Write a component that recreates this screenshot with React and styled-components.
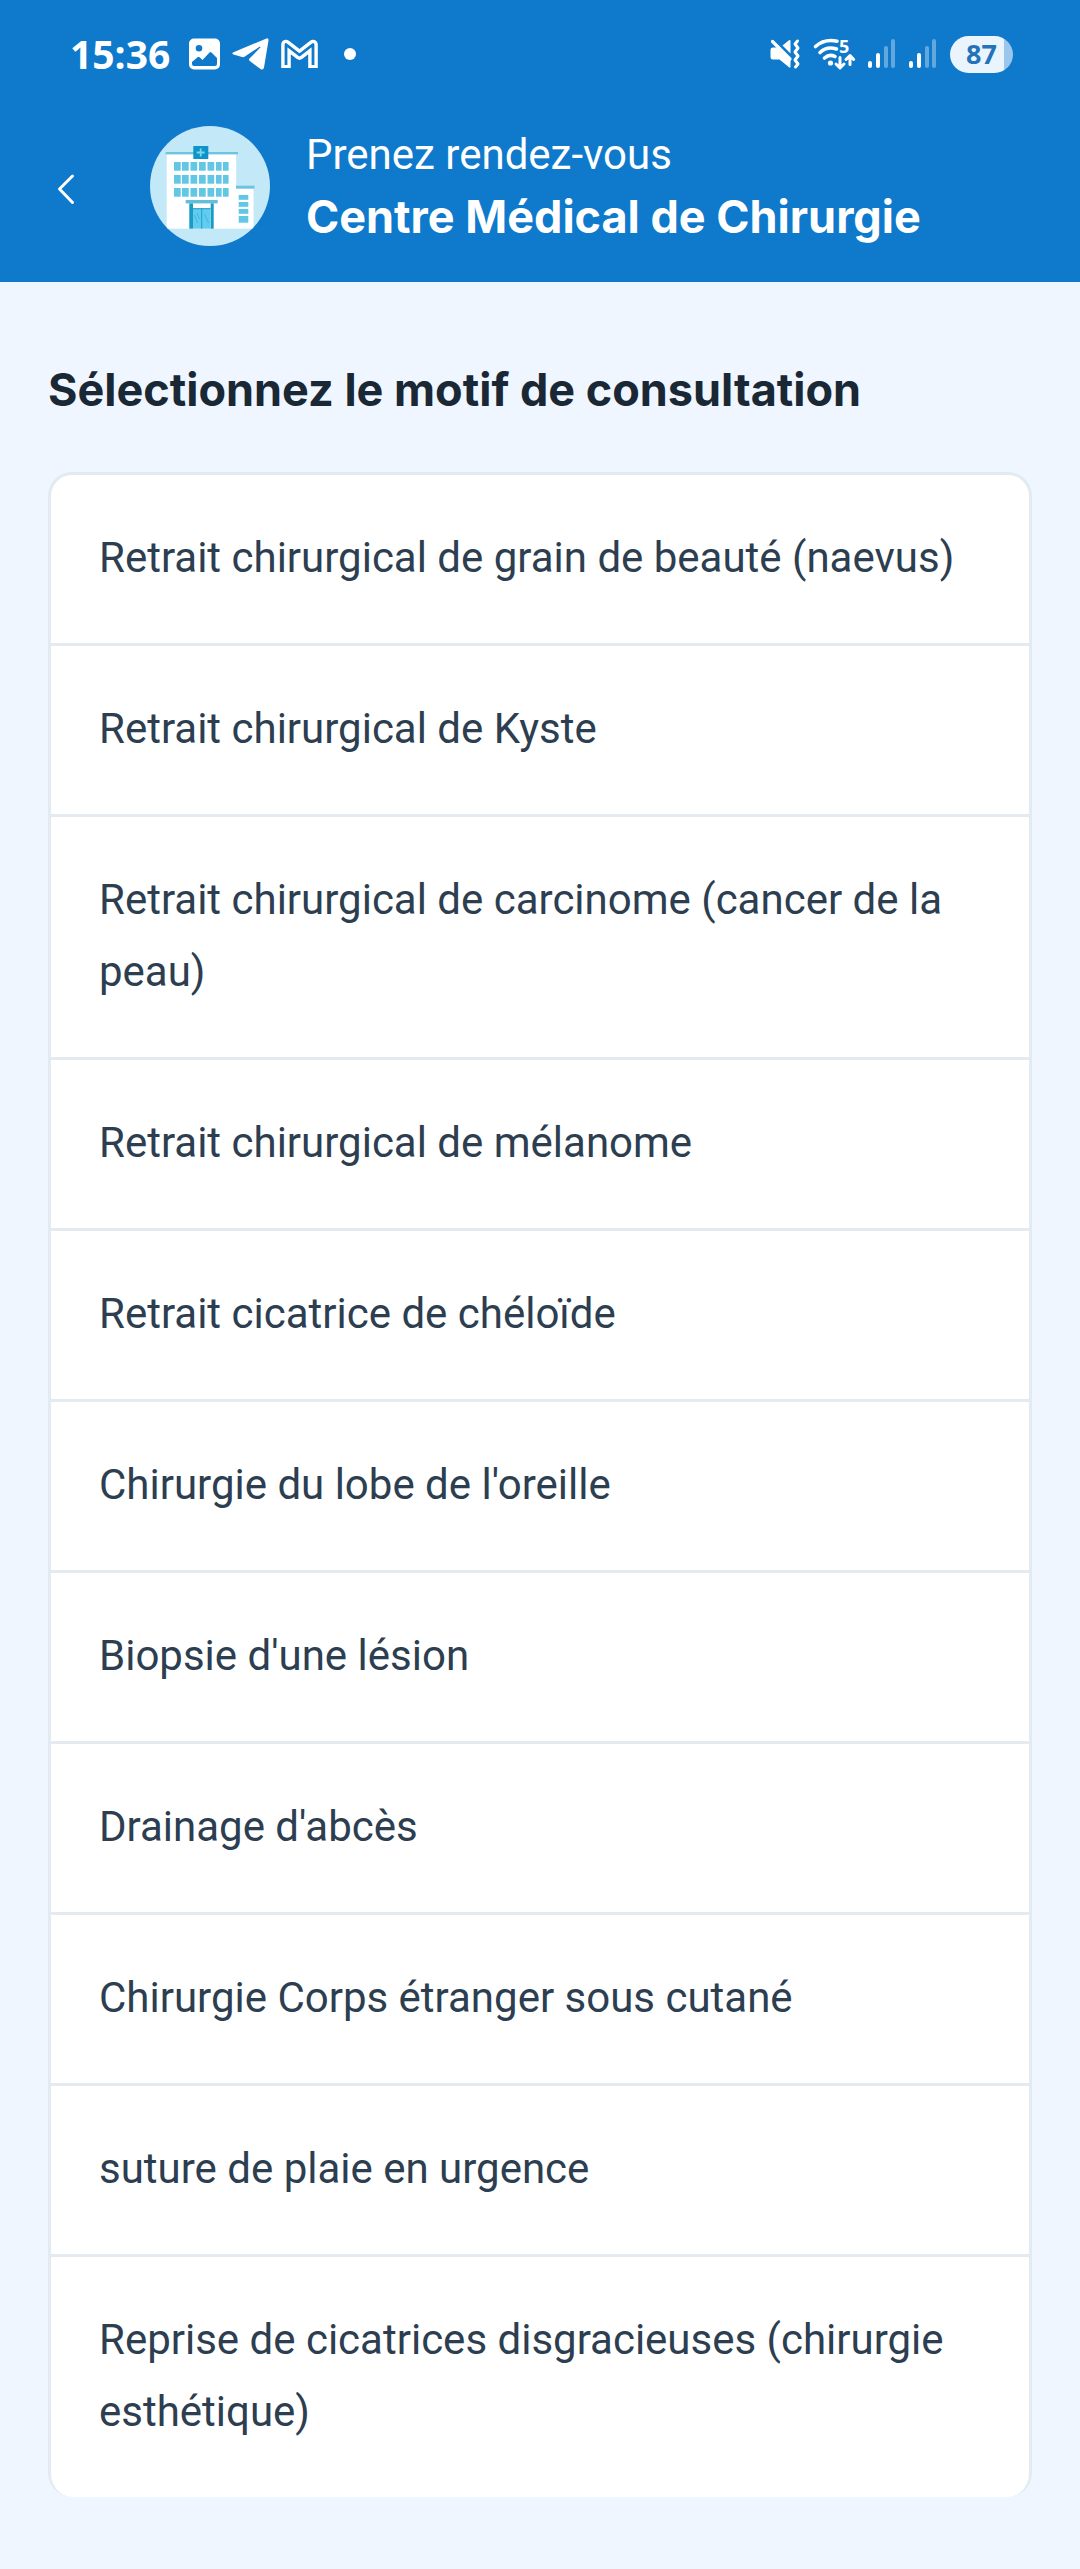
import React from "react";
import styled, { createGlobalStyle } from "styled-components";

const GlobalStyle = createGlobalStyle`
  *, *::before, *::after { box-sizing: border-box; }
  body {
    margin: 0;
    background: #eff6ff;
    font-family: Roboto, "Liberation Sans", sans-serif;
    font-size: 42px;
  }
`;

const Page = styled.div`
  min-height: 100vh;
  background: #eff6ff;
`;

const Header = styled.header`
  background: #0f79cc;
  color: #fff;
`;

const StatusBar = styled.div`
  display: flex;
  align-items: center;
  justify-content: space-between;
  height: 108px;
  padding: 0 67px 0 70px;
`;

const StatusGroup = styled.div`
  display: flex;
  align-items: center;
  gap: ${(p) => p.$gap}px;
`;

const Clock = styled.time`
  margin-right: 7px;
  font: 700 39px/54px "Open Sans", sans-serif;
`;

const Icon = styled.svg`
  display: block;
  flex: none;
  overflow: visible;
  fill: currentColor;
`;

const MoreDot = styled.span`
  width: 12px;
  height: 12px;
  margin-left: 14px;
  border-radius: 50%;
  background: currentColor;
`;

const Battery = styled.span`
  display: flex;
  align-items: center;
  justify-content: center;
  width: 63px;
  height: 37px;
  border-radius: 19px;
  background: linear-gradient(to right, #eaf4fd 86%, #9ac6ee 86%);
  color: #2273b9;
  font: 700 27px/36px "Open Sans", sans-serif;
`;

const TitleBar = styled.div`
  display: flex;
  align-items: center;
  padding: 16px 42px 34px;
`;

const BackButton = styled.button`
  flex: none;
  width: 48px;
  height: 48px;
  margin-right: 60px;
  padding: 0;
  border: 0;
  background: none;
  color: inherit;
  cursor: pointer;
`;

const Avatar = styled.svg`
  flex: none;
  width: 120px;
  height: 120px;
  margin-right: 36px;
  border-radius: 50%;
  background: #c3e8f8;
`;

const Titles = styled.div`
  min-width: 0;
  line-height: 62px;
`;

const Overline = styled.p`
  margin: 0;
`;

const Title = styled.h1`
  margin: 0;
  font: 700 45px/62px Inter, sans-serif;
`;

const Main = styled.main`
  padding: 72px 48px;
`;

const Heading = styled.h2`
  margin: 0 0 46px;
  color: #1a2835;
  font: 700 45px/72px Inter, sans-serif;
`;

const ReasonList = styled.ul`
  margin: 0;
  padding: 0;
  overflow: hidden;
  list-style: none;
  background: #fff;
  border: 3px solid #e3ebf2;
  border-bottom: 0;
  border-radius: 24px;
`;

const ReasonItem = styled.li`
  & + & {
    border-top: 3px solid #e4eaf0;
  }
`;

const ReasonButton = styled.button`
  display: block;
  width: 100%;
  padding: 47px 48px 49px;
  border: 0;
  background: none;
  color: #2c3e50;
  font: inherit;
  line-height: 72px;
  text-align: left;
  cursor: pointer;
`;

const reasons = [
  "Retrait chirurgical de grain de beauté (naevus)",
  "Retrait chirurgical de Kyste",
  "Retrait chirurgical de carcinome (cancer de la peau)",
  "Retrait chirurgical de mélanome",
  "Retrait cicatrice de chéloïde",
  "Chirurgie du lobe de l'oreille",
  "Biopsie d'une lésion",
  "Drainage d'abcès",
  "Chirurgie Corps étranger sous cutané",
  "suture de plaie en urgence",
  "Reprise de cicatrices disgracieuses (chirurgie esthétique)",
];

const GalleryIcon = () => (
  <Icon width="31" height="32" viewBox="0 0 31 32" aria-hidden="true">
    <path
      fillRule="evenodd"
      d="M5 0.5H26A5 5 0 0 1 31 5.500V26.500A5 5 0 0 1 26 31.500H5A5 5 0 0 1 0 26.500V5.500A5 5 0 0 1 5 0.500ZM10 7A3.300 3.300 0 1 0 10 13.600A3.300 3.300 0 1 0 10 7ZM3 24V26A2 2 0 0 0 5 28H26A2 2 0 0 0 28 26V20L22.500 14.500Q21.500 13.500 20.500 14.500L13.500 22L10.500 19.200Q9.500 18.200 8.500 19.200Z"
    />
  </Icon>
);

const TelegramIcon = () => (
  <Icon width="37" height="32" viewBox="0 0 37 32" aria-hidden="true">
    <path d="M1.500 14.300L34.500 0.400Q36.700 -0.200 36.500 2.500L32 29.500Q31.300 32.500 28.500 31L17.500 22.800Q16.500 21.600 17.500 20.500L28.500 9.300Q28.800 8.300 27.500 8.800L12.500 18.700Q11.300 19.400 10 19L1.500 16.500Q-0.800 15.400 1.500 14.300Z" />
  </Icon>
);

const GmailIcon = () => (
  <Icon width="37" height="30" viewBox="0 0 37 30" aria-hidden="true">
    <g fill="none" strokeLinejoin="round">
      <path d="M5 29V5.500L18.500 16L32 5.500V29" stroke="currentColor" strokeWidth="9.600" />
      <path d="M5 26V5.500L18.500 16L32 5.500V26" stroke="#0f79cc" strokeWidth="2.800" />
    </g>
  </Icon>
);

const MuteIcon = () => (
  <Icon width="30" height="30" viewBox="0 0 30 30" aria-hidden="true">
    <path d="M3 8.500H8L20.500 21V27.500Q20.500 29.500 19 28.300L9.500 20.500H3Q0.500 20.500 0.500 18V11Q0.500 8.500 3 8.500Z" />
    <path d="M12.500 6.500L19 1.300Q20.500 0.300 20.500 2V14.500Z" />
    <path
      d="M2.500 2.500L20 20"
      stroke="currentColor"
      strokeWidth="3.200"
      strokeLinecap="round"
    />
    <path
      d="M27.500 2L25 5L28 9L25 13L28 17L25 21L28 25L25.500 28"
      fill="none"
      stroke="currentColor"
      strokeWidth="3"
      strokeLinecap="round"
      strokeLinejoin="round"
    />
  </Icon>
);

const WifiIcon = () => (
  <Icon width="42" height="32" viewBox="0 0 42 32" aria-hidden="true">
    <g
      fill="none"
      stroke="currentColor"
      strokeWidth="3.600"
      strokeLinecap="round"
      strokeLinejoin="round"
    >
      <path d="M2.500 8.500Q11.500 0.500 24 3.200" />
      <path d="M7 14.500Q14 7.800 23.500 11" />
      <path d="M11.500 20Q16.500 15.500 22 18.500" />
      <path d="M27 19.500V29M23 26L27 30L31 26" strokeWidth="3" />
      <path d="M37 26.500V18M33 21.500L37 17.500L40.700 21.500" strokeWidth="3" />
    </g>
    <circle cx="17.500" cy="25" r="2.600" />
    <text x="26" y="15" fontFamily="Open Sans, sans-serif" fontSize="18" fontWeight="700">
      5
    </text>
  </Icon>
);

const SignalIcon = () => (
  <Icon width="28" height="30" viewBox="0 0 28 30" aria-hidden="true">
    <rect x="0" y="22" width="4" height="7" rx="2" />
    <rect x="8" y="14" width="4" height="15" rx="2" />
    <g opacity="0.350">
      <rect x="16" y="7" width="4" height="22" rx="2" />
      <rect x="23" y="0" width="4" height="29" rx="2" />
    </g>
  </Icon>
);

const ChevronLeft = () => (
  <Icon width="48" height="48" viewBox="0 0 48 48" aria-hidden="true">
    <path
      d="M30.500 14L17.500 27L30.500 40.500"
      fill="none"
      stroke="currentColor"
      strokeWidth="3"
      strokeLinecap="round"
      strokeLinejoin="round"
    />
  </Icon>
);

const windowColumns = [24, 32, 40.5, 49, 57.5, 66, 73];
const windowRows = [36, 49, 62];
const annexRows = [69, 76, 83, 90];

const ClinicAvatar = () => (
  <Avatar viewBox="0 0 120 120" role="img" aria-label="Centre médical">
    <rect x="16.700" y="27" width="69.500" height="75.700" fill="#fff" />
    <rect x="86" y="62" width="17.500" height="40.700" fill="#fff" />
    <rect x="15.700" y="26" width="72.300" height="2.400" fill="#6cc4de" />
    <rect x="86" y="59.700" width="18.500" height="3" fill="#6cc4de" />
    <rect x="43.300" y="20" width="15" height="13" fill="#0d94c8" />
    <path d="M50.700 22.500V30.500M46.700 26.500H54.700" stroke="#7bd4f0" strokeWidth="1.800" />
    {windowRows.map((y) =>
      windowColumns.map((x) => (
        <rect key={`${x}-${y}`} x={x} y={y} width={x > 60 ? 5.6 : 6.7} height="8.700" fill="#62c7e5" />
      ))
    )}
    {annexRows.map((y) => (
      <rect key={y} x="88.700" y={y} width="9.600" height={y === 90 ? 6.7 : 4.8} fill="#62c7e5" />
    ))}
    <rect x="35.700" y="74" width="32" height="3.400" fill="#62bfdb" />
    <rect x="39.300" y="77.400" width="3.700" height="25.300" fill="#1a9bc4" />
    <rect x="60.700" y="77.400" width="3" height="25.300" fill="#1a9bc4" />
    <rect x="43" y="82.300" width="17.700" height="20.400" fill="#62ccee" />
    <path d="M43 82.700H60.700M51.700 82.300V102.700" stroke="#1a9bc4" strokeWidth="0.900" />
    <path
      d="M44.500 89L47.500 97M47 87L49.500 93M54.500 88L58.500 97"
      stroke="#2fa6cf"
      strokeWidth="0.600"
    />
  </Avatar>
);

export default function App() {
  return (
    <Page>
      <GlobalStyle />
      <Header>
        <StatusBar>
          <StatusGroup $gap={12}>
            <Clock>15:36</Clock>
            <GalleryIcon />
            <TelegramIcon />
            <GmailIcon />
            <MoreDot />
          </StatusGroup>
          <StatusGroup $gap={13}>
            <MuteIcon />
            <WifiIcon />
            <SignalIcon />
            <SignalIcon />
            <Battery>87</Battery>
          </StatusGroup>
        </StatusBar>
        <TitleBar>
          <BackButton type="button" aria-label="Retour">
            <ChevronLeft />
          </BackButton>
          <ClinicAvatar />
          <Titles>
            <Overline>Prenez rendez-vous</Overline>
            <Title>Centre Médical de Chirurgie</Title>
          </Titles>
        </TitleBar>
      </Header>
      <Main>
        <Heading>Sélectionnez le motif de consultation</Heading>
        <ReasonList>
          {reasons.map((reason) => (
            <ReasonItem key={reason}>
              <ReasonButton type="button">{reason}</ReasonButton>
            </ReasonItem>
          ))}
        </ReasonList>
      </Main>
    </Page>
  );
}
